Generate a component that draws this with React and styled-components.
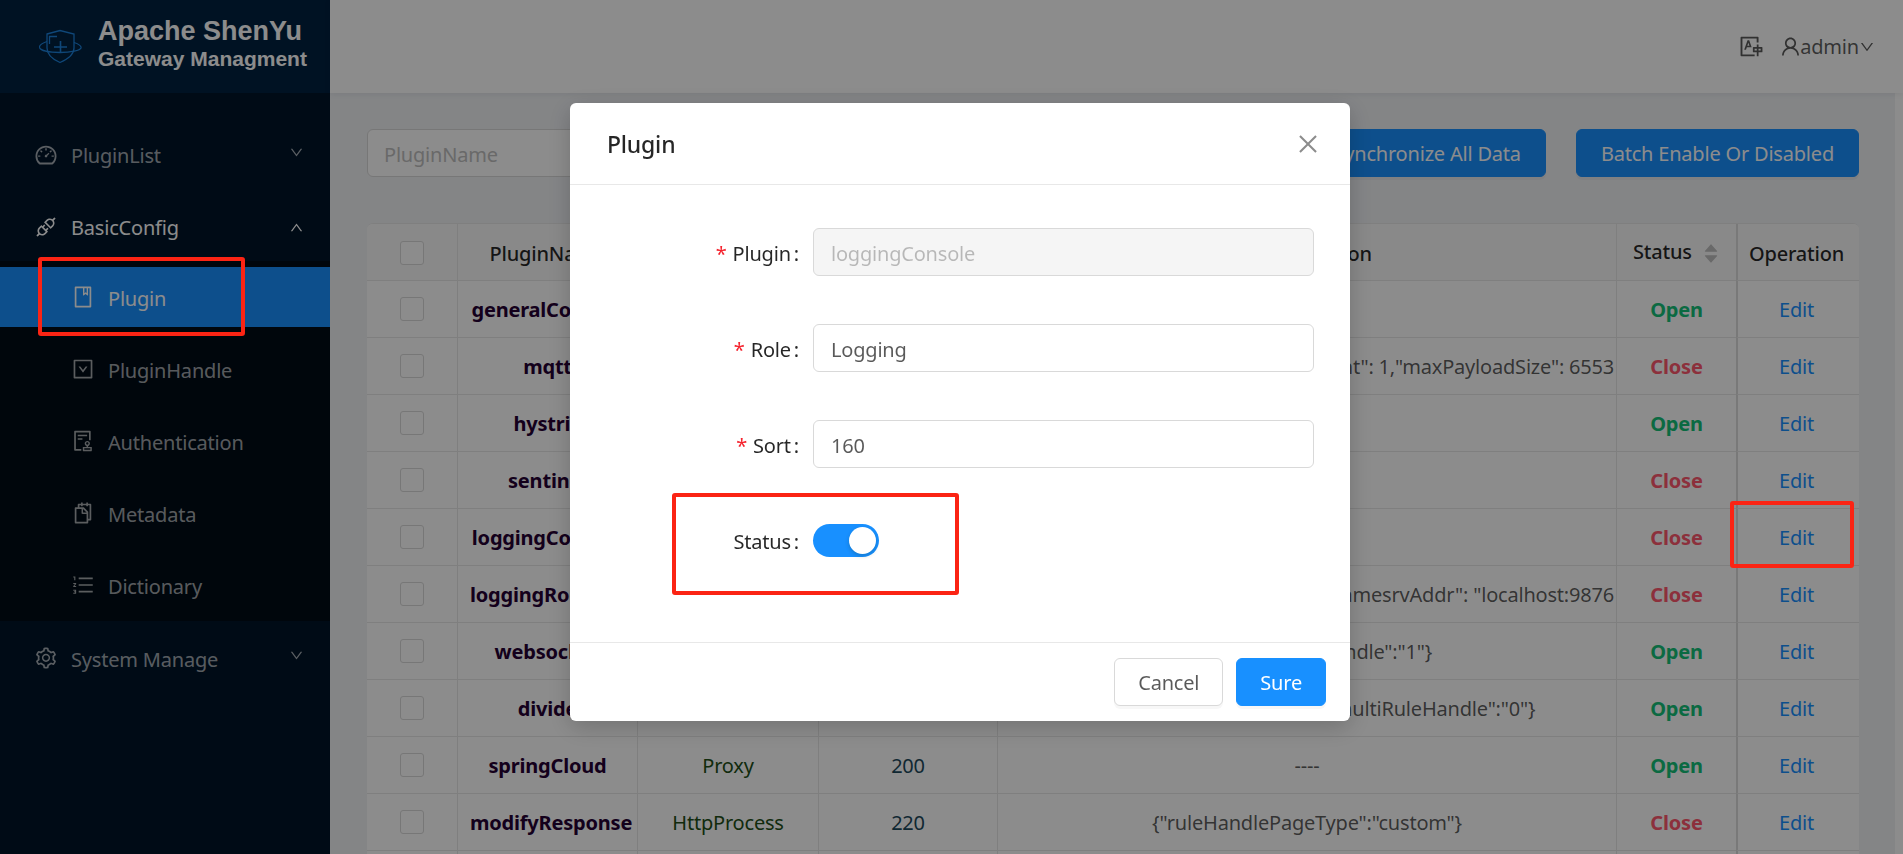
import React from "react";
import styled, { createGlobalStyle } from "styled-components";
import {
  AiOutlineDashboard,
  AiOutlineApi,
  AiOutlineBook,
  AiOutlineDownSquare,
  AiOutlineAudit,
  AiOutlineSnippets,
  AiOutlineOrderedList,
  AiOutlineSetting,
  AiOutlineDown,
  AiOutlineUp,
  AiOutlineUser,
  AiOutlineTranslation,
  AiOutlineClose,
  AiFillCaretUp,
  AiFillCaretDown,
} from "react-icons/ai";

const GlobalStyle = createGlobalStyle`
  html, body {
    margin: 0;
    height: 100%;
    overflow: hidden;
    font-family: "Noto Sans", "Open Sans", sans-serif;
    font-size: 20px;
    letter-spacing: -0.2px;
    color: rgba(0, 0, 0, 0.65);
  }
  * {
    box-sizing: border-box;
  }
`;

const Layout = styled.div`
  display: flex;
  height: 100vh;
  overflow: hidden;
`;

const Sider = styled.aside`
  width: 330px;
  flex: none;
  background: #001529;
  display: flex;
  flex-direction: column;
`;

const Logo = styled.div`
  height: 93px;
  flex: none;
  background: #002140;
  display: flex;
  align-items: center;
  padding-left: 39px;
  gap: 15px;
`;

const LogoText = styled.div`
  font-family: "Liberation Sans", Arial, sans-serif;
  font-weight: bold;
  letter-spacing: 0;
  color: #fff;
  margin-top: -6px;
`;

const LogoTitle = styled.div`
  font-size: 27px;
  line-height: 31px;
`;

const LogoSub = styled.div`
  font-size: 21px;
  line-height: 24px;
`;

const Menu = styled.nav`
  padding-top: 32px;
`;

const MenuItem = styled.div`
  height: 60px;
  display: flex;
  align-items: center;
  gap: 13px;
  padding-left: ${(p) => (p.$sub ? 71 : 34)}px;
  padding-right: 26px;
  margin-bottom: ${(p) => (p.$last ? 0 : 12)}px;
  background: ${(p) => (p.$active ? "#1890ff" : "transparent")};
  color: ${(p) => (p.$active || p.$open ? "#fff" : "rgba(255, 255, 255, 0.65)")};
  white-space: nowrap;

  & > svg:first-child {
    font-size: 24px;
    flex: none;
  }
`;

const MenuLabel = styled.span`
  padding-top: ${(p) => (p.$sub ? 3 : 0)}px;
`;

const MenuChevron = styled.span`
  margin-left: auto;
  display: flex;
  font-size: 15px;
  margin-top: ${(p) => (p.$up ? 0 : -6)}px;
`;

const SubMenu = styled.div`
  background: #000c17;
  padding: 6px 0;
  margin: -8px 0 7px;
`;

const Main = styled.div`
  flex: 1;
  min-width: 0;
  display: flex;
  flex-direction: column;
`;

const Header = styled.header`
  height: 93px;
  flex: none;
  background: #fff;
  box-shadow: 0 1px 6px rgba(0, 21, 41, 0.08);
  display: flex;
  align-items: center;
  justify-content: flex-end;
  padding-right: 28px;
  gap: 15px;
  position: relative;
`;

const UserBox = styled.div`
  display: flex;
  align-items: center;
  line-height: 1;

  & > svg:first-child {
    margin-right: -2px;
  }
`;

const ContentRow = styled.div`
  flex: 1;
  display: flex;
  min-height: 0;
`;

const Content = styled.main`
  flex: 1;
  min-width: 0;
  background: #f0f2f5;
  padding: 36px 36px 0 37px;
`;

const ScrollTrack = styled.div`
  width: 8px;
  flex: none;
  background: #fff;
`;

const Toolbar = styled.div`
  display: flex;
  justify-content: space-between;
  margin-bottom: 46px;
`;

const ToolGroup = styled.div`
  display: flex;
  gap: 30px;
`;

const SearchInput = styled.input`
  width: 300px;
  height: 48px;
  border: 1px solid #d9d9d9;
  border-radius: 6px;
  padding: 2px 16px 0;
  font: inherit;
  letter-spacing: inherit;
  background: #fff;

  &::placeholder {
    color: #bfbfbf;
  }
`;

const Button = styled.button`
  height: 48px;
  padding: 1px 24px 0;
  border-radius: 6px;
  border: 1px solid ${(p) => (p.$primary ? "#1890ff" : "#d9d9d9")};
  background: ${(p) => (p.$primary ? "#1890ff" : "#fff")};
  color: ${(p) => (p.$primary ? "#fff" : "rgba(0, 0, 0, 0.65)")};
  font: inherit;
  letter-spacing: inherit;
  box-shadow: 0 3px 0 rgba(0, 0, 0, 0.03);
  white-space: nowrap;
`;

const FooterButton = styled(Button)`
  padding: 1px 23px 0;
`;

const Table = styled.table`
  width: 100%;
  table-layout: fixed;
  border-collapse: separate;
  border-spacing: 0;
  background: #fff;
  border-radius: 6px 6px 0 0;
  border-top: 1px solid #e8e8e8;
`;

const Th = styled.th`
  height: 57px;
  font-weight: 500;
  color: rgba(0, 0, 0, 0.85);
  background: #fafafa;
  text-align: ${(p) => (p.$left ? "left" : "center")};
  padding: 2px ${(p) => (p.$heavy ? 4 : p.$left ? 16 : 0)}px 0 ${(p) => (p.$left ? 16 : 0)}px;
  border-bottom: 1px solid #e8e8e8;
  border-left: ${(p) => (p.$heavy ? "2px solid #dcdcdc" : "1px solid #e8e8e8")};
  white-space: nowrap;

  &:first-child {
    border-left: none;
    border-top-left-radius: 6px;
  }
  &:last-child {
    border-top-right-radius: 6px;
  }
`;

const Td = styled.td`
  height: 57px;
  padding: 0 ${(p) => (p.$heavy ? 4 : 0)}px 0 0;
  text-align: center;
  border-bottom: 1px solid #e8e8e8;
  border-left: ${(p) => (p.$heavy ? "2px solid #dcdcdc" : "1px solid #e8e8e8")};
  white-space: nowrap;
  overflow: hidden;

  &:first-child {
    border-left: none;
  }
`;

const NameCell = styled(Td)`
  padding: 0 12px;
`;

const ClippedConfig = styled.div`
  display: flex;
  justify-content: flex-end;
  padding-right: 2px;
  overflow: hidden;
`;

const Checkbox = styled.span`
  display: block;
  width: 24px;
  height: 24px;
  margin: -1px auto 0;
  border: 1px solid #d9d9d9;
  border-radius: 3px;
  background: #fff;
`;

const PluginName = styled.span`
  font-weight: 700;
  color: #260033;
`;

const RoleText = styled.span`
  color: #214f17;
`;

const SortText = styled.span`
  color: #1c4a5c;
`;

const StatusText = styled.span`
  font-weight: 700;
  color: ${(p) => (p.$on ? "#14c279" : "#ff586d")};
`;

const EditLink = styled.a`
  color: #1890ff;
`;

const SorterIcons = styled.span`
  display: inline-flex;
  flex-direction: column;
  vertical-align: middle;
  margin-left: 10px;
  font-size: 18px;
  line-height: 0;
  color: #bfbfbf;

  & svg + svg {
    margin-top: -7px;
  }
`;

const Mask = styled.div`
  position: fixed;
  inset: 0;
  background: rgba(0, 0, 0, 0.45);
`;

const ModalRoot = styled.div`
  position: fixed;
  inset: 0;
  display: flex;
  justify-content: center;
  align-items: flex-start;
  padding: 103px 0 0 17px;
`;

const Modal = styled.div`
  width: 780px;
  background: #fff;
  border-radius: 6px;
  box-shadow: 0 6px 24px rgba(0, 0, 0, 0.2);
`;

const ModalHeader = styled.div`
  height: 82px;
  display: flex;
  align-items: center;
  justify-content: space-between;
  padding: 0 29px 0 37px;
  border-bottom: 1px solid #e8e8e8;
`;

const ModalTitle = styled.div`
  font-size: 23px;
  font-weight: 500;
  color: rgba(0, 0, 0, 0.85);
`;

const CloseIcon = styled(AiOutlineClose)`
  font-size: 26px;
  color: rgba(0, 0, 0, 0.45);
`;

const ModalBody = styled.div`
  padding: 43px 0 30px;
`;

const FormRow = styled.div`
  display: grid;
  grid-template-columns: 230px 501px;
  column-gap: 13px;
  align-items: center;
  height: 48px;
  margin-bottom: 48px;
`;

const FormLabel = styled.label`
  text-align: right;
  color: rgba(0, 0, 0, 0.85);
  white-space: nowrap;
  padding-top: 2px;
`;

const RequiredMark = styled.span`
  color: #f5222d;
  margin-right: 6px;
`;

const LabelColon = styled.span`
  margin: 0 1px 0 3px;
`;

const FormInput = styled.input`
  width: 100%;
  height: 48px;
  border: 1px solid #d9d9d9;
  border-radius: 6px;
  padding: 2px 17px 0;
  font: inherit;
  letter-spacing: inherit;
  outline: none;
  background: ${(p) => (p.disabled ? "#f5f5f5" : "#fff")};
  color: ${(p) => (p.disabled ? "rgba(0, 0, 0, 0.25)" : "rgba(0, 0, 0, 0.65)")};
`;

const Switch = styled.span`
  width: 66px;
  height: 33px;
  border-radius: 17px;
  background: #1890ff;
  display: flex;
  justify-content: flex-end;
  align-items: center;
  padding-right: 3px;

  &::after {
    content: "";
    width: 27px;
    height: 27px;
    border-radius: 50%;
    background: #fff;
    box-shadow: 0 2px 4px rgba(0, 35, 11, 0.2);
  }
`;

const ModalFooter = styled.div`
  display: flex;
  justify-content: flex-end;
  gap: 13px;
  padding: 15px 24px 15px 25px;
  border-top: 1px solid #e8e8e8;
`;

const Annotation = styled.div`
  position: fixed;
  left: ${(p) => p.$x}px;
  top: ${(p) => p.$y}px;
  width: ${(p) => p.$w}px;
  height: ${(p) => p.$h}px;
  border: 4px solid #fb2414;
  border-radius: 3px;
`;

const LogoMark = () => (
  <svg width="44" height="36" viewBox="9 9 44 36" fill="none" stroke="#1c82dc" strokeWidth="1.3">
    <path d="M17 14 L30 10.5 L44 14 V28 C44 35 37 39.5 30 42.5 C23 39.5 17 35 17 28 Z" />
    <path d="M17 21.5 C11.5 23.5 9 25.5 9.5 27.5 C10.5 30.5 19 32.5 30 32.5 C41 32.5 50 30.5 51 28 C51.5 26 48.5 24 44 22.5" />
    <path d="M19.5 24 V16.5 H27" />
    <path d="M24 27 H37 M30.5 21 V33" strokeWidth="1.6" />
  </svg>
);

const plugins = [
  { name: "generalContext", role: "Common", sort: 125, config: "----", on: true },
  {
    name: "mqtt",
    role: "Proxy",
    sort: 125,
    config: '{"port": 9500,"bossGroupThreadCount": 1,"maxPayloadSize": 6553',
    clip: true,
    on: false,
  },
  { name: "hystrix", role: "FaultTolerance", sort: 130, config: "----", on: true },
  { name: "sentinel", role: "FaultTolerance", sort: 140, config: "----", on: false },
  { name: "loggingConsole", role: "Logging", sort: 160, config: "----", on: false },
  {
    name: "loggingRocketMQ",
    role: "Logging",
    sort: 170,
    config: '{"topic":"shenyu-access-logging", "namesrvAddr": "localhost:9876',
    clip: true,
    on: false,
  },
  { name: "websocket", role: "Proxy", sort: 200, config: '{"multiSelectorHandle":"1"}', on: true },
  { name: "divide", role: "Proxy", sort: 200, config: '{"multiSelectorHandle":"1","multiRuleHandle":"0"}', on: true },
  { name: "springCloud", role: "Proxy", sort: 200, config: "----", on: true },
  { name: "modifyResponse", role: "HttpProcess", sort: 220, config: '{"ruleHandlePageType":"custom"}', on: false },
  { name: "rateLimiter", role: "FaultTolerance", sort: 230, config: "----", on: false },
];

const subItems = [
  { label: "Plugin", icon: <AiOutlineBook />, active: true },
  { label: "PluginHandle", icon: <AiOutlineDownSquare /> },
  { label: "Authentication", icon: <AiOutlineAudit /> },
  { label: "Metadata", icon: <AiOutlineSnippets /> },
  { label: "Dictionary", icon: <AiOutlineOrderedList /> },
];

const App = () => {
  return (
    <>
      <GlobalStyle />
      <Layout>
        <Sider>
          <Logo>
            <LogoMark />
            <LogoText>
              <LogoTitle>Apache ShenYu</LogoTitle>
              <LogoSub>Gateway Managment</LogoSub>
            </LogoText>
          </Logo>
          <Menu>
            <MenuItem>
              <AiOutlineDashboard />
              <MenuLabel>PluginList</MenuLabel>
              <MenuChevron>
                <AiOutlineDown />
              </MenuChevron>
            </MenuItem>
            <MenuItem $open>
              <AiOutlineApi />
              <MenuLabel>BasicConfig</MenuLabel>
              <MenuChevron $up>
                <AiOutlineUp />
              </MenuChevron>
            </MenuItem>
            <SubMenu>
              {subItems.map((item, index) => (
                <MenuItem key={item.label} $sub $active={item.active} $last={index === subItems.length - 1}>
                  {item.icon}
                  <MenuLabel $sub>{item.label}</MenuLabel>
                </MenuItem>
              ))}
            </SubMenu>
            <MenuItem>
              <AiOutlineSetting />
              <MenuLabel $sub>System Manage</MenuLabel>
              <MenuChevron>
                <AiOutlineDown />
              </MenuChevron>
            </MenuItem>
          </Menu>
        </Sider>
        <Main>
          <Header>
            <AiOutlineTranslation size={25} />
            <UserBox>
              <AiOutlineUser size={23} />
              admin
              <AiOutlineDown size={16} />
            </UserBox>
          </Header>
          <ContentRow>
            <Content>
              <Toolbar>
                <SearchInput placeholder="PluginName" />
                <ToolGroup>
                  <Button $primary>Synchronize All Data</Button>
                  <Button $primary>Batch Enable Or Disabled</Button>
                </ToolGroup>
              </Toolbar>
              <Table>
                <colgroup>
                  <col style={{ width: 90 }} />
                  <col style={{ width: 180 }} />
                  <col style={{ width: 181 }} />
                  <col style={{ width: 179 }} />
                  <col style={{ width: 619 }} />
                  <col style={{ width: 120 }} />
                  <col style={{ width: 123 }} />
                </colgroup>
                <thead>
                  <tr>
                    <Th>
                      <Checkbox />
                    </Th>
                    <Th>PluginName</Th>
                    <Th>Role</Th>
                    <Th>Sort</Th>
                    <Th>Configuration</Th>
                    <Th $left>
                      Status
                      <SorterIcons>
                        <AiFillCaretUp />
                        <AiFillCaretDown />
                      </SorterIcons>
                    </Th>
                    <Th $heavy>Operation</Th>
                  </tr>
                </thead>
                <tbody>
                  {plugins.map((plugin) => (
                    <tr key={plugin.name}>
                      <Td>
                        <Checkbox />
                      </Td>
                      <NameCell>
                        <PluginName>{plugin.name}</PluginName>
                      </NameCell>
                      <Td>
                        <RoleText>{plugin.role}</RoleText>
                      </Td>
                      <Td>
                        <SortText>{plugin.sort}</SortText>
                      </Td>
                      <Td>
                        {plugin.clip ? <ClippedConfig>{plugin.config}</ClippedConfig> : plugin.config}
                      </Td>
                      <Td>
                        <StatusText $on={plugin.on}>{plugin.on ? "Open" : "Close"}</StatusText>
                      </Td>
                      <Td $heavy>
                        <EditLink>Edit</EditLink>
                      </Td>
                    </tr>
                  ))}
                </tbody>
              </Table>
            </Content>
            <ScrollTrack />
          </ContentRow>
        </Main>
      </Layout>
      <Mask />
      <ModalRoot>
        <Modal>
          <ModalHeader>
            <ModalTitle>Plugin</ModalTitle>
            <CloseIcon />
          </ModalHeader>
          <ModalBody>
            <FormRow>
              <FormLabel>
                <RequiredMark>*</RequiredMark>Plugin<LabelColon>:</LabelColon>
              </FormLabel>
              <FormInput disabled value="loggingConsole" readOnly />
            </FormRow>
            <FormRow>
              <FormLabel>
                <RequiredMark>*</RequiredMark>Role<LabelColon>:</LabelColon>
              </FormLabel>
              <FormInput value="Logging" readOnly />
            </FormRow>
            <FormRow>
              <FormLabel>
                <RequiredMark>*</RequiredMark>Sort<LabelColon>:</LabelColon>
              </FormLabel>
              <FormInput value="160" readOnly />
            </FormRow>
            <FormRow>
              <FormLabel>
                Status<LabelColon>:</LabelColon>
              </FormLabel>
              <Switch />
            </FormRow>
          </ModalBody>
          <ModalFooter>
            <FooterButton>Cancel</FooterButton>
            <FooterButton $primary>Sure</FooterButton>
          </ModalFooter>
        </Modal>
      </ModalRoot>
      <Annotation $x={38} $y={257} $w={207} $h={79} />
      <Annotation $x={672} $y={493} $w={287} $h={102} />
      <Annotation $x={1730} $y={501} $w={124} $h={67} />
    </>
  );
};

export default App;
